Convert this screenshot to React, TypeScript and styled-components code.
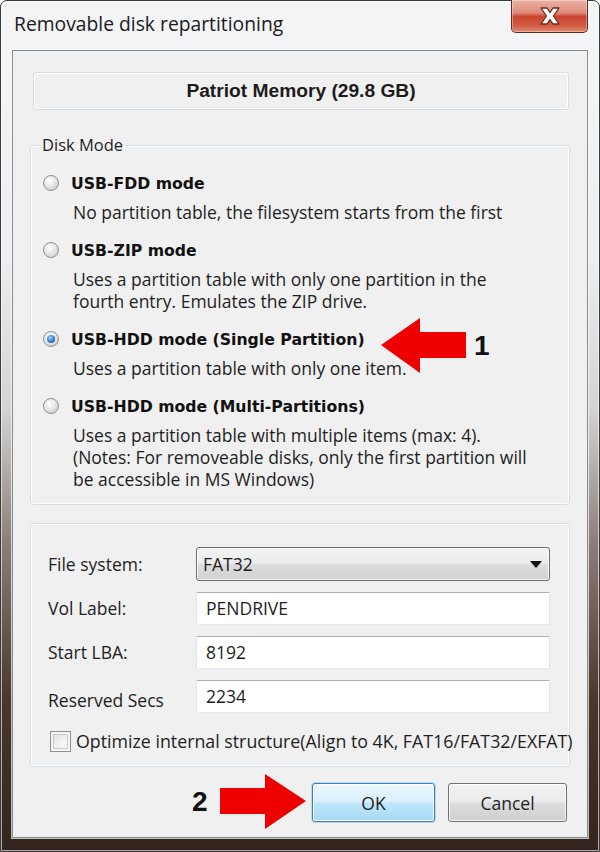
import React from 'react';
import styled, { createGlobalStyle } from 'styled-components';

const GlobalStyle = createGlobalStyle`
  html, body {
    margin: 0;
    padding: 0;
  }
  body {
    width: 600px;
    height: 852px;
    overflow: hidden;
    background: #ffffff;
    font-family: "Open Sans", "Noto Sans", sans-serif;
    color: #1e1e1e;
  }
`;

const Window = styled.div`
  position: relative;
  width: 600px;
  height: 852px;
  box-sizing: border-box;
  display: flex;
  flex-direction: column;
  padding: 0 11px 13px 11px;
  border: 1px solid #3a3a3a;
  border-radius: 7px 7px 0 0;
  background: linear-gradient(
    to bottom,
    #f3f5f7 0%,
    #eceef1 30%,
    #d4d3d3 48%,
    #8a7d77 64%,
    #4a3830 82%,
    #33241e 100%
  );
  box-shadow: inset 0 0 0 1px rgba(255, 255, 255, 0.6);
`;

const TitleBar = styled.div`
  height: 49px;
  flex: none;
  display: flex;
  justify-content: space-between;
  align-items: flex-start;
`;

const Title = styled.div`
  margin: 9px 0 0 2px;
  font-family: "Open Sans", "Noto Sans", sans-serif;
  font-size: 19.3px;
  color: #1b1b1b;
`;

const CloseButton = styled.div`
  width: 77px;
  height: 33px;
  margin: -1px 0 0 0;
  box-sizing: border-box;
  display: flex;
  align-items: center;
  justify-content: center;
  border: 1px solid #5e2b24;
  border-top: none;
  border-radius: 0 0 5px 5px;
  background: linear-gradient(
    to bottom,
    #eab2a6 0%,
    #df8a79 40%,
    #c9442f 52%,
    #d25b43 80%,
    #e48a73 100%
  );
  box-shadow: inset 0 0 0 1px rgba(255, 255, 255, 0.35);
`;

const Panel = styled.div`
  flex: 1;
  display: flex;
  flex-direction: column;
  padding: 21px 17px 0 17px;
  border: 1px solid #858a90;
  background: #f0f0f0;
  box-shadow: 0 0 0 1px rgba(255, 255, 255, 0.7);
`;

const DeviceBox = styled.div`
  height: 38px;
  margin: 0 1px 0 3px;
  box-sizing: border-box;
  display: flex;
  align-items: center;
  justify-content: center;
  border: 1px solid #d5dfe5;
  border-radius: 3px;
  box-shadow: inset 0 0 0 1px #ffffff;
  font-family: "Liberation Sans", Arial, sans-serif;
  font-weight: bold;
  font-size: 19.2px;
  color: #1c1c1c;
`;

const Group = styled.fieldset<{ $top: number }>`
  margin: ${p => p.$top}px 0 0 0;
  padding: 0 19px 14px 10px;
  border: 1px solid #d5dfe5;
  border-radius: 4px;
  box-shadow: inset 0 0 0 1px #ffffff;
  min-width: 0;
`;

const Legend = styled.legend`
  margin-left: 0;
  padding: 0 2px 0 1px;
  line-height: 20px;
  font-size: 16.5px;
  color: #1e1e1e;
`;

const OptionList = styled.div`
  display: flex;
  flex-direction: column;
  gap: 13px;
  padding: 14px 0 0 2px;
`;

const Option = styled.div`
  display: flex;
  flex-direction: column;
`;

const OptionRow = styled.div`
  height: 28px;
  display: flex;
  align-items: center;
  gap: 12px;
`;

const Radio = styled.span<{ $checked?: boolean }>`
  width: 16px;
  height: 16px;
  box-sizing: border-box;
  border-radius: 50%;
  border: 1px solid #8f9092;
  background: radial-gradient(circle at 40% 35%, #ffffff 0%, #e6e6e6 45%, #c4c4c4 100%);
  display: flex;
  align-items: center;
  justify-content: center;
  flex: none;

  &::after {
    content: '';
    display: ${p => (p.$checked ? 'block' : 'none')};
    width: 8px;
    height: 8px;
    border-radius: 50%;
    background: radial-gradient(circle at 40% 35%, #a8d8fa 0%, #2f7fc8 55%, #174e87 100%);
  }
`;

const OptionLabel = styled.span`
  font-family: "DejaVu Sans", Verdana, sans-serif;
  font-weight: bold;
  font-size: 15.7px;
  color: #111;
`;

const OptionText = styled.div`
  margin: 4px 0 0 30px;
  font-size: 17.5px;
  line-height: 22px;
  color: #1e1e1e;
`;

const FormGrid = styled.div`
  display: grid;
  grid-template-columns: 148px 1fr;
  grid-auto-rows: 34px;
  row-gap: 10px;
  align-items: center;
  padding: 23px 0 0 7px;
`;

const FieldLabel = styled.span<{ $nudge?: number }>`
  font-size: 17.5px;
  color: #1e1e1e;
  margin-top: ${p => p.$nudge || 0}px;
`;

const Combo = styled.div`
  height: 34px;
  box-sizing: border-box;
  display: flex;
  align-items: center;
  justify-content: space-between;
  padding: 0 7px 0 6px;
  border: 1px solid #6e6e6e;
  border-radius: 3px;
  background: linear-gradient(to bottom, #f4f4f4 0%, #ebebeb 48%, #dcdcdc 52%, #d2d2d2 100%);
  box-shadow: inset 0 0 0 1px rgba(255, 255, 255, 0.8);
  font-size: 17.5px;
  color: #1e1e1e;
`;

const ComboArrow = styled.span`
  width: 0;
  height: 0;
  border-left: 6px solid transparent;
  border-right: 6px solid transparent;
  border-top: 7px solid #111;
`;

const TextBox = styled.div`
  height: 33px;
  box-sizing: border-box;
  display: flex;
  align-items: center;
  padding: 0 9px;
  background: #ffffff;
  border: 1px solid #e2e3ea;
  border-top-color: #abadb3;
  border-bottom-color: #e3e9ef;
  border-radius: 2px;
  font-size: 17.5px;
  color: #1e1e1e;
`;

const CheckRow = styled.div`
  display: flex;
  align-items: center;
  gap: 5px;
  margin: 17px 0 0 9px;
  height: 22px;
`;

const CheckBox = styled.span`
  width: 21px;
  height: 21px;
  box-sizing: border-box;
  flex: none;
  border: 1px solid #8e8f8f;
  background: linear-gradient(135deg, #dcdcdc 0%, #f4f4f4 60%, #ffffff 100%);
  box-shadow: inset 0 0 0 2px #f4f4f4, inset 0 0 0 3px #c9c9c9;
`;

const CheckLabel = styled.span`
  font-size: 17.8px;
  white-space: nowrap;
  color: #1e1e1e;
`;

const ButtonRow = styled.div`
  display: flex;
  justify-content: flex-end;
  gap: 13px;
  margin: 16px 3px 0 0;
`;

const Button = styled.div<{ $focused?: boolean; $width: number }>`
  width: ${p => p.$width}px;
  height: 39px;
  box-sizing: border-box;
  display: flex;
  align-items: center;
  justify-content: center;
  border: 1px solid ${p => (p.$focused ? '#3c7fb1' : '#707070')};
  border-radius: 3px;
  background: ${p =>
    p.$focused
      ? 'linear-gradient(to bottom, #eaf6fd 0%, #d9f0fc 48%, #bee6fd 52%, #a7d9f5 100%)'
      : 'linear-gradient(to bottom, #f2f2f2 0%, #ebebeb 48%, #dddddd 52%, #cfcfcf 100%)'};
  box-shadow: ${p =>
    p.$focused
      ? 'inset 0 0 0 1px #ffffff, 0 0 0 1px rgba(72, 182, 236, 0.35)'
      : 'inset 0 0 0 1px rgba(255, 255, 255, 0.8)'};
  font-size: 17.5px;
  color: #1e1e1e;
`;

const Annotation = styled.div<{ $x: number; $y: number; $gap: number }>`
  position: absolute;
  left: ${p => p.$x}px;
  top: ${p => p.$y}px;
  display: flex;
  align-items: center;
  gap: ${p => p.$gap}px;
`;

const StepNumber = styled.span`
  font-family: "Liberation Sans", Arial, sans-serif;
  font-weight: bold;
  font-size: 28px;
  line-height: 1;
  color: #111;
`;

const CloseGlyph = () => (
  <svg width="28" height="20" viewBox="0 0 28 20">
    <path
      d="M5 2 L11 2 L14 6.5 L17 2 L23 2 L17.5 10 L23 18 L17 18 L14 13.5 L11 18 L5 18 L10.5 10 Z"
      fill="#ffffff"
      stroke="#6a2a22"
      strokeWidth="1.3"
      strokeLinejoin="round"
    />
  </svg>
);

const LeftArrow = () => (
  <svg width="86" height="56" viewBox="0 0 86 56">
    <polygon points="0,27 39,0 39,14 85,14 85,40 39,40 39,55" fill="#ee0000" />
  </svg>
);

const RightArrow = () => (
  <svg width="86" height="56" viewBox="0 0 86 56">
    <polygon points="0,14 45,14 45,0 86,27 45,55 45,40 0,40" fill="#ee0000" />
  </svg>
);

type ModeOption = {
  label: string;
  lines: string[];
  checked?: boolean;
};

const modes: ModeOption[] = [
  {
    label: 'USB-FDD mode',
    lines: ['No partition table, the filesystem starts from the first']
  },
  {
    label: 'USB-ZIP mode',
    lines: ['Uses a partition table with only one partition in the', 'fourth entry. Emulates the ZIP drive.']
  },
  {
    label: 'USB-HDD mode (Single Partition)',
    lines: ['Uses a partition table with only one item.'],
    checked: true
  },
  {
    label: 'USB-HDD mode (Multi-Partitions)',
    lines: [
      'Uses a partition table with multiple items (max: 4).',
      '(Notes: For removeable disks, only the first partition will',
      'be accessible in MS Windows)'
    ]
  }
];

const fields = [
  { label: 'Vol Label:', value: 'PENDRIVE' },
  { label: 'Start LBA:', value: '8192' },
  { label: 'Reserved Secs', value: '2234', nudge: 8 }
];

export default function App() {
  return (
    <>
      <GlobalStyle />
      <Window>
        <TitleBar>
          <Title>Removable disk repartitioning</Title>
          <CloseButton>
            <CloseGlyph />
          </CloseButton>
        </TitleBar>

        <Panel>
          <DeviceBox>Patriot Memory (29.8 GB)</DeviceBox>

          <Group $top={25}>
            <Legend>Disk Mode</Legend>
            <OptionList>
              {modes.map(mode => (
                <Option key={mode.label}>
                  <OptionRow>
                    <Radio $checked={mode.checked} />
                    <OptionLabel>{mode.label}</OptionLabel>
                  </OptionRow>
                  <OptionText>
                    {mode.lines.map(line => (
                      <div key={line}>{line}</div>
                    ))}
                  </OptionText>
                </Option>
              ))}
            </OptionList>
          </Group>

          <Group $top={18}>
            <FormGrid>
              <FieldLabel>File system:</FieldLabel>
              <Combo>
                <span>FAT32</span>
                <ComboArrow />
              </Combo>
              {fields.map(field => (
                <React.Fragment key={field.label}>
                  <FieldLabel $nudge={field.nudge}>{field.label}</FieldLabel>
                  <TextBox>{field.value}</TextBox>
                </React.Fragment>
              ))}
            </FormGrid>
            <CheckRow>
              <CheckBox />
              <CheckLabel>Optimize internal structure(Align to 4K, FAT16/FAT32/EXFAT)</CheckLabel>
            </CheckRow>
          </Group>

          <ButtonRow>
            <Button $focused $width={123}>OK</Button>
            <Button $width={119}>Cancel</Button>
          </ButtonRow>
        </Panel>

        <Annotation $x={380} $y={317} $gap={7}>
          <LeftArrow />
          <StepNumber>1</StepNumber>
        </Annotation>
        <Annotation $x={191} $y={773} $gap={12}>
          <StepNumber>2</StepNumber>
          <RightArrow />
        </Annotation>
      </Window>
    </>
  );
}
